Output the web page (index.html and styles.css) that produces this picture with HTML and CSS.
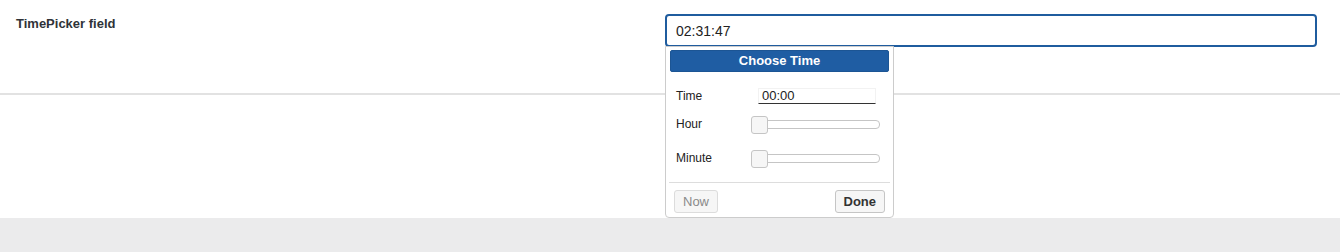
FILE: index.html
```html
<!DOCTYPE html>
<html lang="en">
<head>
    <meta charset="UTF-8">
    <meta name="viewport" content="width=device-width, initial-scale=1.0">
    <title>TimePicker field</title>
    <link rel="stylesheet" href="styles.css">
</head>
<body>
    <div class="field-row">
        <label class="field-label" for="time">TimePicker field</label>
        <div class="field-control">
            <input class="time-input" id="time" type="text" value="02:31:47">

            <!-- Time picker popup -->
            <div class="picker">
                <div class="picker-header">Choose Time</div>
                <div class="picker-body">
                    <div class="picker-label">Time</div>
                    <div class="picker-value"><span class="time-box">00:00</span></div>

                    <div class="picker-label slider-row">Hour</div>
                    <div class="slider-row"><div class="slider"><span class="handle"></span></div></div>

                    <div class="picker-label slider-row minute">Minute</div>
                    <div class="slider-row minute"><div class="slider"><span class="handle"></span></div></div>
                </div>
                <div class="picker-buttons">
                    <button class="btn btn-now">Now</button>
                    <button class="btn btn-done">Done</button>
                </div>
            </div>
        </div>
    </div>

    <div class="content"></div>
    <div class="footer"></div>
</body>
</html>
```

FILE: styles.css
```css
body {
    font-family: "Liberation Sans", Arial, sans-serif;
    background-color: #ffffff;
    color: #333333;
    margin: 0;
    padding: 0;
}
.field-row {
    display: grid;
    grid-template-columns: 649px 1fr;
    padding: 14px 23px 46px 16px;
    border-bottom: 2px solid #e2e2e2;
}
.field-label {
    font-size: 13px;
    font-weight: bold;
    line-height: 15px;
    margin-top: 2px;
    color: #2f3338;
}
.field-control {
    position: relative;
}
.time-input {
    display: block;
    box-sizing: border-box;
    width: 100%;
    height: 33px;
    margin: 0;
    padding: 0 9px;
    border: 2px solid #1f5c9e;
    border-radius: 4px;
    font-family: "Liberation Sans", Arial, sans-serif;
    font-size: 14px;
    color: #222222;
    outline: none;
}
.picker {
    position: absolute;
    top: 32px;
    left: 0;
    width: 219px;
    padding: 3px 4px 0;
    background-color: #ffffff;
    border: 1px solid #cccccc;
    border-radius: 0 0 4px 4px;
    z-index: 2;
}
.picker-header {
    height: 20px;
    line-height: 20px;
    background-color: #1f5da3;
    border: 1px solid #1c5594;
    border-radius: 2px;
    color: #ffffff;
    font-size: 13px;
    font-weight: bold;
    text-align: center;
}
.picker-body {
    display: grid;
    grid-template-columns: 75px 1fr;
    padding: 16px 9px 0 6px;
    font-size: 12px;
    color: #222222;
}
.picker-label {
    height: 16px;
    line-height: 16px;
}
.picker-value {
    height: 16px;
}
.time-box {
    display: block;
    box-sizing: border-box;
    width: 118px;
    height: 16px;
    margin-left: 7px;
    padding-left: 3px;
    border: 1px solid #f2f2f2;
    border-bottom-color: #333333;
    font-size: 13px;
    line-height: 14px;
}
.slider-row {
    height: 18px;
    line-height: 18px;
    margin-top: 11px;
}
.slider-row.minute {
    margin-top: 16px;
}
.slider {
    position: relative;
    box-sizing: border-box;
    height: 9px;
    margin-top: 5px;
    border: 1px solid #c5c5c5;
    border-radius: 4px;
    background-color: #ffffff;
}
.handle {
    position: absolute;
    top: -5px;
    left: -1px;
    box-sizing: border-box;
    width: 17px;
    height: 18px;
    border: 1px solid #c5c5c5;
    border-radius: 3px;
    background-color: #f6f6f6;
}
.picker-buttons {
    display: flex;
    justify-content: space-between;
    margin: 15px -1px 0;
    padding: 7px 5px 4px;
    border-top: 1px solid #dddddd;
}
.btn {
    height: 23px;
    padding: 0 8px;
    border: 1px solid #c5c5c5;
    border-radius: 3px;
    background-color: #f6f6f6;
    font-family: "Liberation Sans", Arial, sans-serif;
    font-size: 13px;
    color: #454545;
    cursor: pointer;
}
.btn-now {
    color: #8a8a8a;
    border-color: #dcdcdc;
}
.btn-done {
    font-weight: bold;
    color: #333333;
}
.content {
    height: 123px;
}
.footer {
    height: 34px;
    background-color: #ebebec;
}
```
